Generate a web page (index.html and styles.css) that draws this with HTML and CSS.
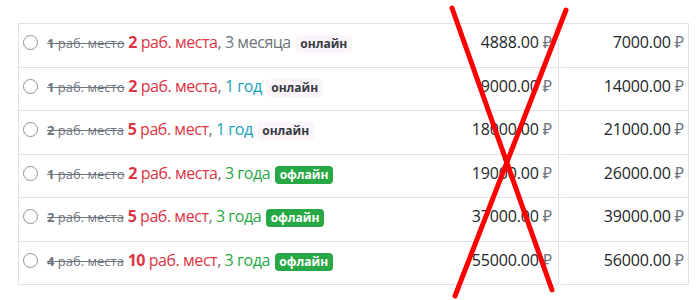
FILE: index.html
```html
<!DOCTYPE html>
<html lang="ru">
<head>
<meta charset="utf-8">
<title>Тарифы</title>
<link rel="stylesheet" href="styles.css">
</head>
<body>
<div class="page">
  <div class="table">
    <div class="cell name"><span class="radio"></span><span class="label"><del><b>1</b> раб. место</del> <span class="main"><b>2</b> раб. места</span><span class="sep">,</span> <span class="term gray">3 месяца</span> <span class="badge online">онлайн</span></span></div>
    <div class="cell price">4888.00 <span class="rub">₽</span></div>
    <div class="gap"></div>
    <div class="cell price last">7000.00 <span class="rub">₽</span></div>

    <div class="cell name"><span class="radio"></span><span class="label"><del><b>1</b> раб. место</del> <span class="main"><b>2</b> раб. места</span><span class="sep">,</span> <span class="term teal">1 год</span> <span class="badge online">онлайн</span></span></div>
    <div class="cell price">9000.00 <span class="rub">₽</span></div>
    <div class="gap"></div>
    <div class="cell price last">14000.00 <span class="rub">₽</span></div>

    <div class="cell name"><span class="radio"></span><span class="label"><del><b>2</b> раб. места</del> <span class="main"><b>5</b> раб. мест</span><span class="sep">,</span> <span class="term teal">1 год</span> <span class="badge online">онлайн</span></span></div>
    <div class="cell price">18000.00 <span class="rub">₽</span></div>
    <div class="gap"></div>
    <div class="cell price last">21000.00 <span class="rub">₽</span></div>

    <div class="cell name"><span class="radio"></span><span class="label"><del><b>1</b> раб. место</del> <span class="main"><b>2</b> раб. места</span><span class="sep">,</span> <span class="term green">3 года</span> <span class="badge offline">офлайн</span></span></div>
    <div class="cell price">19000.00 <span class="rub">₽</span></div>
    <div class="gap"></div>
    <div class="cell price last">26000.00 <span class="rub">₽</span></div>

    <div class="cell name"><span class="radio"></span><span class="label"><del><b>2</b> раб. места</del> <span class="main"><b>5</b> раб. мест</span><span class="sep">,</span> <span class="term green">3 года</span> <span class="badge offline">офлайн</span></span></div>
    <div class="cell price">37000.00 <span class="rub">₽</span></div>
    <div class="gap"></div>
    <div class="cell price last">39000.00 <span class="rub">₽</span></div>

    <div class="cell name"><span class="radio"></span><span class="label"><del><b>4</b> раб. места</del> <span class="main"><b>10</b> раб. мест</span><span class="sep">,</span> <span class="term green">3 года</span> <span class="badge offline">офлайн</span></span></div>
    <div class="cell price">55000.00 <span class="rub">₽</span></div>
    <div class="gap"></div>
    <div class="cell price last">56000.00 <span class="rub">₽</span></div>
  </div>
</div>
<svg class="cross" width="700" height="300" viewBox="0 0 700 300" aria-hidden="true">
  <line x1="452" y1="8" x2="552" y2="290" />
  <line x1="566" y1="10" x2="455" y2="296" />
</svg>
</body>
</html>
```

FILE: styles.css
```css
html, body {
  margin: 0;
  padding: 0;
  background: #ffffff;
}

body {
  font-family: "Open Sans", "Noto Sans", sans-serif;
  font-size: 16px;
  color: #212529;
  width: 700px;
  height: 300px;
  overflow: hidden;
  position: relative;
}

.page {
  padding: 23px 11px 0 18px;
}

.table {
  border: 1px solid #dee2e6;
  border-bottom: none;
  display: grid;
  grid-template-columns: 1fr 150px 2px 127px;
  grid-template-rows: repeat(6, 43.5px);
}

.cell {
  border-bottom: 1px solid #dee2e6;
  line-height: 24px;
  padding-top: 6px;
  box-sizing: border-box;
  white-space: nowrap;
}

.name {
  padding-left: 4px;
  padding-top: 0;
  padding-bottom: 5px;
  display: flex;
  align-items: center;
}

.label {
  white-space: nowrap;
  letter-spacing: -0.45px;
}

.price {
  text-align: right;
  padding-right: 6px;
  border-right: 1px solid #dee2e6;
  letter-spacing: -0.15px;
}

.price.last {
  border-right: none;
  padding-right: 4px;
}

.gap {
  background: #ffffff;
}

.radio {
  display: inline-block;
  width: 15px;
  height: 15px;
  box-sizing: border-box;
  border: 1.5px solid #8f8f9d;
  border-radius: 50%;
  margin-right: 9px;
  flex: none;
}

del {
  font-size: 13px;
  color: #6c757d;
  letter-spacing: 0;
}

.main {
  color: #dc3545;
}

.sep {
  color: #6c757d;
}

.gray {
  color: #6c757d;
}

.teal {
  color: #17a2b8;
}

.green {
  color: #28a745;
}

.rub {
  color: #6c757d;
}

.badge {
  display: inline-block;
  font-size: 12px;
  font-weight: 700;
  line-height: 1;
  padding: 3px 4.8px;
  border-radius: 4px;
  letter-spacing: 0;
  margin-left: 1px;
}

.online {
  background: #fcf4fb;
  color: #343a40;
}

.offline {
  background: #28a745;
  color: #ffffff;
}

.cross {
  position: absolute;
  top: 0;
  left: 0;
  pointer-events: none;
}

.cross line {
  stroke: #ff0000;
  stroke-width: 5;
  stroke-linecap: round;
}
```
